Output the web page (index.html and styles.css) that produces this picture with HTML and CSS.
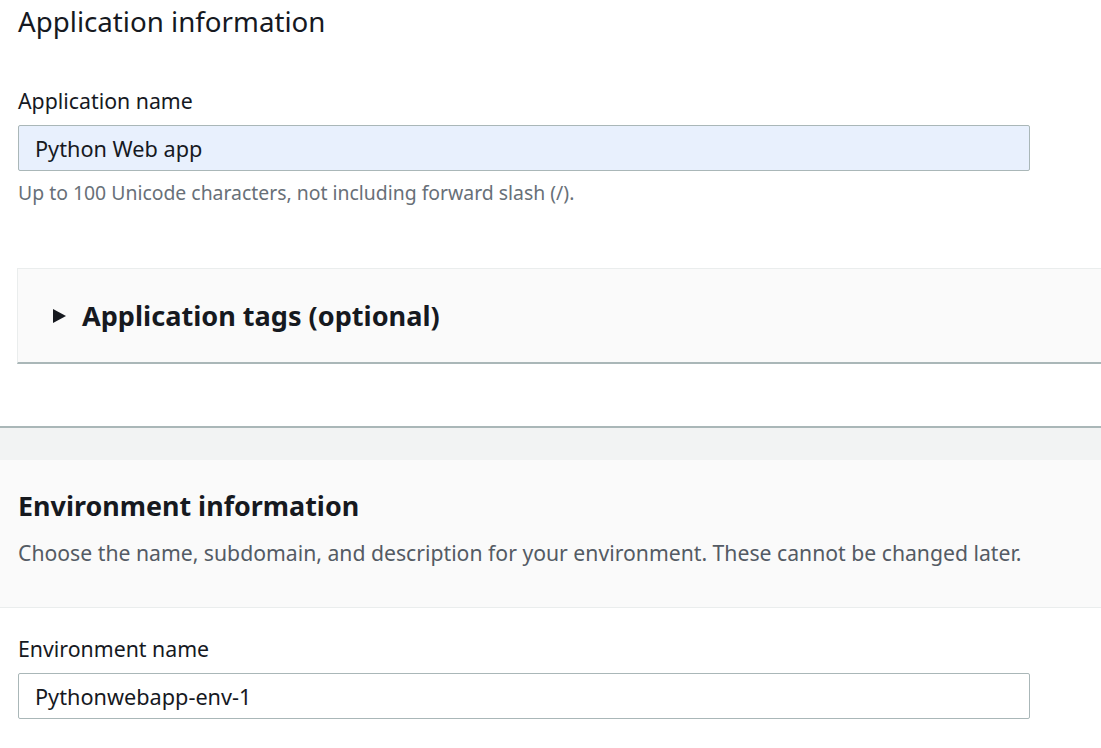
FILE: index.html
```html
<!DOCTYPE html>
<html lang="en">
<head>
<meta charset="utf-8">
<title>Create application</title>
<link rel="stylesheet" href="styles.css">
</head>
<body>
<section class="app-section">
  <h1 class="title">Application information</h1>
  <div class="field first">
    <label class="field-label">Application name</label>
    <div class="input autofill">Python Web app</div>
    <p class="hint">Up to 100 Unicode characters, not including forward slash (/).</p>
  </div>
  <div class="expander">
    <span class="caret"><svg width="13" height="14" viewBox="0 0 13 14"><path d="M0 0 L13 7 L0 14 Z" fill="#16191f"/></svg></span>
    <h2 class="expander-title">Application tags (optional)</h2>
  </div>
</section>
<section class="env-section">
  <div class="band"></div>
  <header class="env-header">
    <h2 class="env-title">Environment information</h2>
    <p class="env-desc">Choose the name, subdomain, and description for your environment. These cannot be changed later.</p>
  </header>
  <div class="field env-field">
    <label class="field-label">Environment name</label>
    <div class="input">Pythonwebapp-env-1</div>
  </div>
</section>
</body>
</html>
```
FILE: styles.css
```css
html, body {
  margin: 0;
  padding: 0;
  background: #ffffff;
  overflow: hidden;
}
body {
  font-family: "Noto Sans", "Open Sans", sans-serif;
  color: #16191f;
}
.app-section {
  padding: 5px 0 0 0;
}
.title {
  margin: 0 0 0 18px;
  font-size: 27.7px;
  font-weight: 400;
  line-height: 32px;
}
.field {
  padding: 0 0 0 18px;
}
.field.first {
  margin-top: 51px;
}
.field-label {
  display: block;
  font-size: 21.3px;
  line-height: 26px;
}
.input {
  box-sizing: border-box;
  width: 1012px;
  height: 46px;
  margin-top: 11px;
  padding: 0 16px;
  border: 1px solid #aab7b8;
  border-radius: 2px;
  background: #ffffff;
  font-size: 21.7px;
  line-height: 46px;
}
.input.autofill {
  background: #e8f0fd;
}
.hint {
  margin: 10px 0 0 0;
  font-size: 19.4px;
  line-height: 24px;
  color: #687078;
}
.expander {
  box-sizing: border-box;
  display: flex;
  align-items: center;
  gap: 16px;
  height: 96px;
  margin: 63px -20px 0 17px;
  padding: 0 0 0 35px;
  background: #fafafa;
  border-top: 1px solid #eaeded;
  border-left: 1px solid #eaeded;
  border-bottom: 2px solid #aab7b8;
}
.caret {
  display: flex;
}
.expander-title {
  margin: 0;
  font-size: 27.1px;
  font-weight: 700;
  line-height: 32px;
}
.env-section {
  margin-top: 62px;
}
.band {
  height: 32px;
  background: #f2f3f3;
  border-top: 2px solid #aab7b8;
}
.env-header {
  padding: 30px 18px 41px 18px;
  background: #fafafa;
  border-bottom: 1px solid #eaeded;
}
.env-title {
  margin: 0;
  font-size: 26.9px;
  font-weight: 700;
  line-height: 32px;
}
.env-desc {
  margin: 18px 0 0 0;
  font-size: 21.2px;
  line-height: 26px;
  color: #545b64;
}
.env-field {
  margin-top: 28px;
}
```
